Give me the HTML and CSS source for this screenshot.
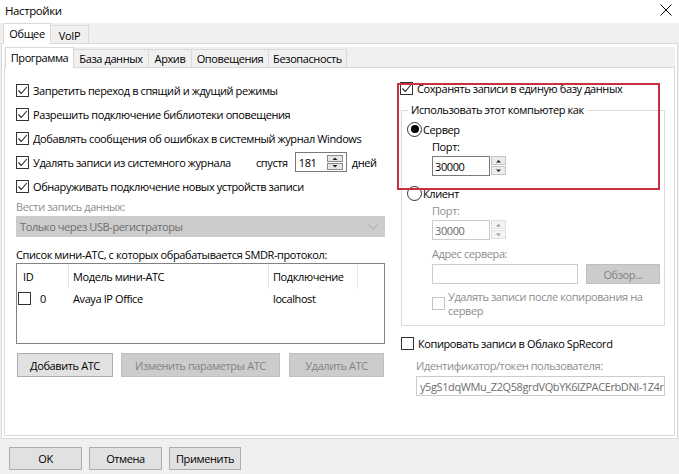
FILE: index.html
```html
<!DOCTYPE html>
<html lang="ru">
<head>
<meta charset="utf-8">
<title>Настройки</title>
<link rel="stylesheet" href="styles.css">
</head>
<body>
<div class="titlebar">
  <span class="title">Настройки</span>
  <svg class="close" width="12" height="12" viewBox="0 0 12 12"><path d="M0.5 0.5L11.5 11.5M11.5 0.5L0.5 11.5" stroke="#000" stroke-width="1" fill="none"/></svg>
</div>

<div class="tabs outer-tabs">
  <div class="tab active w-general">Общее</div>
  <div class="tab w-voip">VoIP</div>
</div>

<div class="outer-page">
  <div class="tabs inner-tabs">
    <div class="tab active w-prog">Программа</div>
    <div class="tab w-db">База данных</div>
    <div class="tab w-arch">Архив</div>
    <div class="tab w-notif">Оповещения</div>
    <div class="tab w-sec">Безопасность</div>
  </div>

  <div class="inner-page">
    <div class="col-left">
      <div class="cb-row"><span class="cb checked"><svg width="11" height="11" viewBox="0 0 11 11"><path d="M1.5 5.5L4.3 8.5L9.8 2" fill="none" stroke="#222" stroke-width="1.1"/></svg></span><span>Запретить переход в спящий и ждущий режимы</span></div>
      <div class="cb-row"><span class="cb checked"><svg width="11" height="11" viewBox="0 0 11 11"><path d="M1.5 5.5L4.3 8.5L9.8 2" fill="none" stroke="#222" stroke-width="1.1"/></svg></span><span>Разрешить подключение библиотеки оповещения</span></div>
      <div class="cb-row"><span class="cb checked"><svg width="11" height="11" viewBox="0 0 11 11"><path d="M1.5 5.5L4.3 8.5L9.8 2" fill="none" stroke="#222" stroke-width="1.1"/></svg></span><span>Добавлять сообщения об ошибках в системный журнал Windows</span></div>
      <div class="cb-row">
        <div class="cb-label-fixed"><span class="cb checked"><svg width="11" height="11" viewBox="0 0 11 11"><path d="M1.5 5.5L4.3 8.5L9.8 2" fill="none" stroke="#222" stroke-width="1.1"/></svg></span><span>Удалять записи из системного журнала</span></div>
        <span>спустя</span>
        <div class="num-inline">
          <span class="num-val">181</span>
          <div class="num-btns">
            <span class="num-btn"><svg width="14" height="7" viewBox="0 0 14 7"><path d="M4.5 5L7 2.5L9.5 5Z" fill="#222"/></svg></span>
            <span class="num-btn"><svg width="14" height="7" viewBox="0 0 14 7"><path d="M4.5 2L7 4.5L9.5 2Z" fill="#222"/></svg></span>
          </div>
        </div>
        <span class="days">дней</span>
      </div>
      <div class="cb-row"><span class="cb checked"><svg width="11" height="11" viewBox="0 0 11 11"><path d="M1.5 5.5L4.3 8.5L9.8 2" fill="none" stroke="#222" stroke-width="1.1"/></svg></span><span>Обнаруживать подключение новых устройств записи</span></div>

      <div class="label-disabled rec-label">Вести запись данных:</div>
      <div class="combo">
        <span>Только через USB-регистраторы</span>
        <svg width="10" height="6" viewBox="0 0 10 6"><path d="M0.5 0.5L5 5L9.5 0.5" fill="none" stroke="#a6a6a6" stroke-width="1"/></svg>
      </div>

      <div class="list-label">Список мини-АТС, с которых обрабатывается SMDR-протокол:</div>
      <div class="list">
        <div class="list-head">
          <div class="c1 hd">ID</div>
          <div class="c2 hd">Модель мини-АТС</div>
          <div class="c3 hd">Подключение</div>
        </div>
        <div class="list-row">
          <div class="c1 row-id"><span class="cb"></span><span class="id-num">0</span></div>
          <div class="c2">Avaya IP Office</div>
          <div class="c3">localhost</div>
        </div>
      </div>

      <div class="btn-row">
        <button class="btn b-add">Добавить АТС</button>
        <button class="btn disabled b-edit">Изменить параметры АТС</button>
        <button class="btn disabled b-del">Удалить АТС</button>
      </div>
    </div>

    <div class="col-right">
      <div class="cb-row h20 shift"><span class="cb checked"><svg width="11" height="11" viewBox="0 0 11 11"><path d="M1.5 5.5L4.3 8.5L9.8 2" fill="none" stroke="#222" stroke-width="1.1"/></svg></span><span>Сохранять записи в единую базу данных</span></div>

      <fieldset class="group">
        <legend>Использовать этот компьютер как</legend>
        <div class="radio-row"><span class="radio on"><span class="dot"></span></span><span>Сервер</span></div>
        <div class="sub">
          <div class="small-label">Порт:</div>
          <div class="spin">
            <span class="spin-input">30000</span>
            <div class="spin-btns">
              <span class="spin-btn"><svg width="13" height="8" viewBox="0 0 13 8"><path d="M4 5.5L6.5 3L9 5.5Z" fill="#222"/></svg></span>
              <span class="spin-btn"><svg width="13" height="8" viewBox="0 0 13 8"><path d="M4 2.5L6.5 5L9 2.5Z" fill="#222"/></svg></span>
            </div>
          </div>
        </div>
        <div class="radio-row client"><span class="radio"></span><span>Клиент</span></div>
        <div class="sub">
          <div class="small-label label-disabled">Порт:</div>
          <div class="spin off">
            <span class="spin-input">30000</span>
            <div class="spin-btns">
              <span class="spin-btn"><svg width="13" height="8" viewBox="0 0 13 8"><path d="M4 5.5L6.5 3L9 5.5Z" fill="#9a9a9a"/></svg></span>
              <span class="spin-btn"><svg width="13" height="8" viewBox="0 0 13 8"><path d="M4 2.5L6.5 5L9 2.5Z" fill="#9a9a9a"/></svg></span>
            </div>
          </div>
          <div class="small-label label-disabled addr-label">Адрес сервера:</div>
          <div class="addr-row">
            <span class="textbox off addr"></span>
            <button class="btn disabled browse">Обзор...</button>
          </div>
          <div class="del-row">
            <span class="cb off"></span>
            <span class="del-text label-disabled">Удалять записи после копирования на<br>сервер</span>
          </div>
        </div>
      </fieldset>

      <div class="cb-row h20 cloud"><span class="cb"></span><span>Копировать записи в Облако SpRecord</span></div>
      <div class="label-disabled token-label">Идентификатор/токен пользователя:</div>
      <div class="textbox off token"><span class="token-text">y5gS1dqWMu_Z2Q58grdVQbYK6lZPACErbDNl-1Z4r</span></div>

      <div class="highlight"></div>
    </div>
  </div>
</div>

<div class="footer">
  <button class="btn f-ok">OK</button>
  <button class="btn f-cancel">Отмена</button>
  <button class="btn f-apply">Применить</button>
</div>
</body>
</html>
```

FILE: styles.css
```css
* { box-sizing: border-box; margin: 0; padding: 0; }

html, body {
  width: 679px;
  height: 474px;
  overflow: hidden;
}

body {
  background: #f0f0f0;
  font-family: "Open Sans", "Noto Sans", sans-serif;
  font-size: 11px;
  letter-spacing: -0.4px;
  color: #000;
}

/* title bar */
.titlebar {
  height: 23px;
  background: #fff;
  display: flex;
  align-items: center;
  justify-content: space-between;
  padding: 0 7px 3px 5px;
}
.title { font-size: 11.5px; }

/* tabs */
.tabs {
  display: flex;
  align-items: flex-end;
  height: 20px;
}
.tab {
  height: 18px;
  border-top: 1px solid #d9d9d9;
  border-right: 1px solid #d9d9d9;
  background: #f0f0f0;
  display: flex;
  align-items: center;
  justify-content: center;
  white-space: nowrap;
}
.tab.active {
  height: 21px;
  margin-bottom: -1px;
  background: #fff;
  border-left: 1px solid #d9d9d9;
  position: relative;
  z-index: 2;
  padding-bottom: 1px;
}
.outer-tabs {
  padding-left: 3px;
  position: relative;
  z-index: 1;
}
.w-general { width: 48px; }
.w-voip { width: 38px; padding-top: 1px; }

.outer-page {
  margin-left: 1px;
  width: 677px;
  height: 396px;
  border: 1px solid #d9d9d9;
  background: #fff;
  padding: 3px 2px 2px 2px;
}
.inner-tabs {
  padding-left: 1px;
  background: #f0f0f0;
  position: relative;
  z-index: 1;
}
.w-prog { width: 69px; }
.w-db { width: 75px; }
.w-arch { width: 43px; }
.w-notif { width: 77px; }
.w-sec { width: 78px; }

.inner-page {
  height: 369px;
  border: 1px solid #d9d9d9;
  background: #fff;
  display: flex;
  padding: 10px 0 0 11px;
}

/* checkboxes */
.cb {
  flex: 0 0 auto;
  width: 13px;
  height: 13px;
  border: 1px solid #333;
  background: #fff;
  display: inline-flex;
  align-items: center;
  justify-content: center;
  margin-right: 4px;
}
.cb svg { display: block; }
.cb.off { border-color: #c4c4c4; }

.cb-row {
  height: 24px;
  display: flex;
  align-items: center;
  white-space: nowrap;
}
.cb-row.h20 { height: 20px; }
.cb-label-fixed {
  flex: 0 0 240px;
  display: flex;
  align-items: center;
}

/* left column */
.col-left {
  width: 369px;
  flex: 0 0 369px;
  display: flex;
  flex-direction: column;
}

.num-inline {
  margin-left: 7px;
  width: 52px;
  height: 20px;
  border: 1px solid #7a7a7a;
  display: flex;
  align-items: center;
  justify-content: space-between;
  padding: 0 3px 0 3px;
}
.num-btns {
  display: flex;
  flex-direction: column;
  gap: 1px;
}
.num-btn {
  width: 16px;
  height: 7px;
  border: 1px solid #8a8a8a;
  background: #e6e6e6;
  display: flex;
  align-items: center;
  justify-content: center;
  overflow: hidden;
}
.num-btn svg { flex: 0 0 auto; }
.days { margin-left: 5px; }

.label-disabled { color: #8d8d8d; }

.rec-label {
  height: 17px;
  line-height: 17px;
}
.combo {
  margin-top: 1px;
  height: 21px;
  background: #cccccc;
  border: 1px solid #cccccc;
  color: #6d6d6d;
  display: flex;
  align-items: center;
  justify-content: space-between;
  padding: 0 6px 0 3px;
}

.list-label {
  margin-top: 10px;
  line-height: 16px;
  height: 16px;
}
.list {
  height: 81px;
  border: 1px solid #828282;
  background: #fff;
}
.list-head, .list-row {
  display: flex;
  align-items: center;
  white-space: nowrap;
}
.list-head { height: 25px; }
.list-row { height: 18px; }
.c1 { width: 52px; padding-left: 6px; }
.c2 { width: 200px; padding-left: 4px; }
.c3 { width: 89px; padding-left: 4px; }
.list-head .hd {
  height: 25px;
  display: flex;
  align-items: center;
  border-right: 1px solid #e5e5e5;
}
.list-row .c1, .list-row .c2, .list-row .c3 { border-right: 1px solid transparent; }
.row-id {
  display: flex;
  align-items: center;
  padding-left: 1px;
}
.row-id .cb { margin-right: 9px; }

.btn-row {
  margin-top: 9px;
  display: flex;
}
.btn {
  font-family: inherit;
  font-size: 11px;
  letter-spacing: inherit;
  color: #000;
  background: #e1e1e1;
  border: 1px solid #adadad;
  height: 24px;
  display: flex;
  align-items: center;
  justify-content: center;
}
.btn.disabled {
  background: #cccccc;
  border-color: #bfbfbf;
  color: #838383;
}
.b-add { width: 96px; margin-left: 1px; }
.b-edit { width: 159px; margin-left: 8px; }
.b-del { width: 95px; margin-left: 9px; }

/* right column */
.col-right {
  width: 264px;
  flex: 0 0 264px;
  margin-left: 16px;
  position: relative;
  display: flex;
  flex-direction: column;
}
.shift { margin-left: -1px; }

.group {
  margin-top: 4px;
  width: 264px;
  border: 1px solid #dcdcdc;
  padding: 2px 0 7px 0;
  min-width: 0;
}
.group legend {
  margin-left: 6px;
  padding: 0 3px;
  line-height: 16px;
  height: 16px;
}
.radio-row {
  height: 18px;
  display: flex;
  align-items: center;
  margin-left: 5px;
}
.radio-row.client { margin-top: 8px; }
.radio {
  width: 15px;
  height: 15px;
  border: 1px solid #333;
  border-radius: 50%;
  background: #fff;
  margin-right: 1px;
  display: flex;
  align-items: center;
  justify-content: center;
}
.radio .dot {
  width: 8px;
  height: 8px;
  border-radius: 50%;
  background: #000;
}
.sub {
  margin-left: 30px;
  display: flex;
  flex-direction: column;
}
.small-label {
  margin-top: 1px;
  line-height: 16px;
  height: 16px;
}
.spin {
  margin-top: 1px;
  height: 20px;
  display: flex;
}
.spin-input {
  width: 58px;
  height: 20px;
  border: 1px solid #7a7a7a;
  background: #fff;
  padding-left: 2px;
  display: flex;
  align-items: center;
}
.spin-btns {
  margin-left: 1px;
  display: flex;
  flex-direction: column;
  gap: 1px;
}
.spin-btn {
  width: 15px;
  height: 9px;
  border: 1px solid #c4c4c4;
  background: #ececec;
  display: flex;
  align-items: center;
  justify-content: center;
  overflow: hidden;
}
.spin-btn svg { flex: 0 0 auto; }
.spin.off .spin-input { border-color: #cccccc; color: #6d6d6d; }
.spin.off .spin-btn { border-color: #e0e0e0; background: #f3f3f3; }

.addr-label { margin-top: 6px; }
.addr-row {
  margin-top: 2px;
  display: flex;
  height: 20px;
}
.textbox {
  height: 20px;
  border: 1px solid #7a7a7a;
  background: #fff;
  display: flex;
  align-items: center;
  padding-left: 2px;
  white-space: nowrap;
  overflow: hidden;
}
.textbox.off { border-color: #cccccc; color: #6d6d6d; }
.addr { width: 146px; }
.browse {
  width: 74px;
  height: 20px;
  margin-left: 8px;
  color: #8a8a8a;
}
.del-row {
  margin-top: 6px;
  display: flex;
  align-items: flex-start;
}
.del-row .cb {
  margin-top: 7px;
  margin-right: 3px;
}
.del-text {
  line-height: 14px;
  white-space: nowrap;
}

.cloud { margin-top: 7px; }
.token-label {
  margin-top: 5px;
  line-height: 16px;
  height: 16px;
  margin-left: 15px;
}
.token {
  margin-top: 2px;
  margin-left: 15px;
  width: 249px;
  padding-left: 3px;
}
.token-text { white-space: nowrap; }

/* red annotation frame overlaying the settings */
.highlight {
  position: absolute;
  left: -4px;
  top: 5px;
  width: 263px;
  height: 107px;
  border: 2px solid #c8303a;
  pointer-events: none;
}

/* footer */
.footer {
  display: flex;
  padding: 8px 0 0 9px;
}
.footer .btn { height: 23px; }
.f-ok { width: 73px; }
.f-cancel { width: 73px; margin-left: 7px; }
.f-apply { width: 72px; margin-left: 7px; }
```
